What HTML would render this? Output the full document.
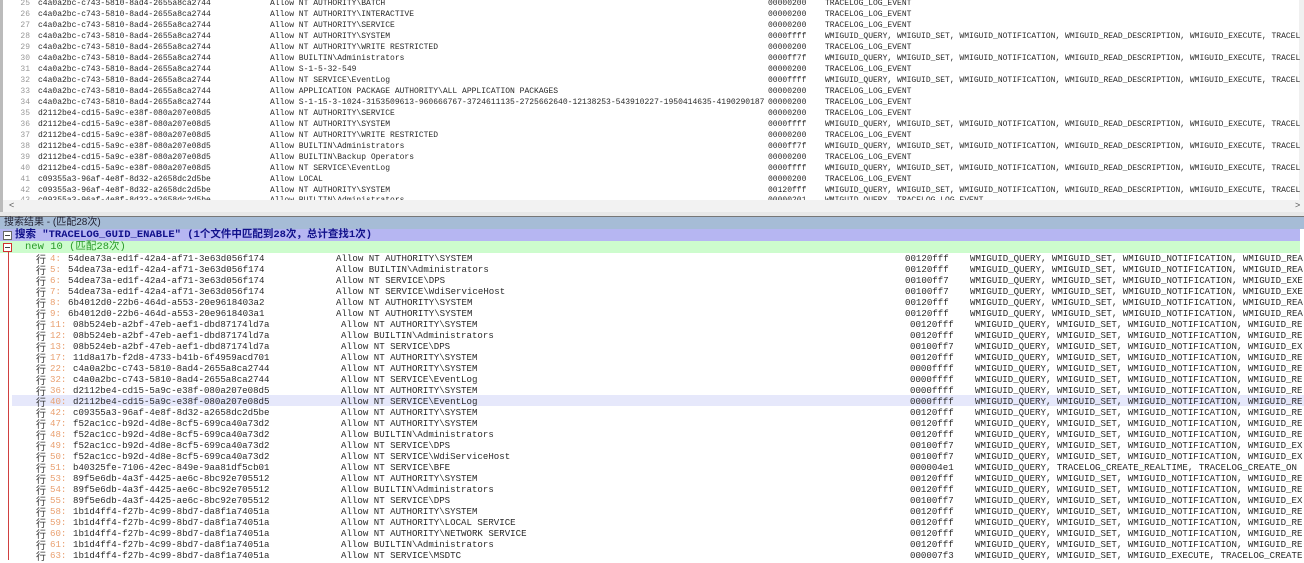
<!DOCTYPE html>
<html><head><meta charset="utf-8"><style>
body{margin:0;width:1304px;height:560px;overflow:hidden;background:#fff;position:relative;font-family:"Liberation Mono","Noto Sans CJK SC",monospace;color:#2a2a2a}
.r{position:absolute;left:0;height:11px;width:1304px;white-space:pre;font-size:8px;line-height:11px}
.r span{position:absolute;top:0}
.n{left:6px;width:24px;text-align:right;color:#999}
.g{left:38px}.a{left:270px}.m{left:768px}.w{left:825px}
.b{position:absolute;height:11px;white-space:pre;font-size:9.1px;line-height:11px;width:1304px}
.b span{position:absolute;top:0}
.h{left:36px;font-family:"Noto Sans CJK SC",sans-serif;font-size:10px;color:#333}
.k{left:50px;color:#e9a070}
.G{left:68px}.A{left:336px}.M{left:905px}.W{left:970px}
.b.d{left:5px}
.bx{position:absolute;left:3px;top:2px;width:7px;height:7px;background:#fff}
.bx:after{content:"";position:absolute;left:1px;top:3px;width:5px;height:1px;background:#444}
</style></head><body>
<div style="position:absolute;left:0;top:0;width:3px;height:212px;background:#bbb"></div>
<div style="position:absolute;left:1299px;top:0;width:5px;height:200px;background:#f0f0f0"></div>
<div class="r" style="top:-2px"><span class="n">25</span><span class="g">c4a0a2bc-c743-5810-8ad4-2655a8ca2744</span><span class="a">Allow NT AUTHORITY\BATCH</span><span class="m">00000200</span><span class="w">TRACELOG_LOG_EVENT</span></div>
<div class="r" style="top:9px"><span class="n">26</span><span class="g">c4a0a2bc-c743-5810-8ad4-2655a8ca2744</span><span class="a">Allow NT AUTHORITY\INTERACTIVE</span><span class="m">00000200</span><span class="w">TRACELOG_LOG_EVENT</span></div>
<div class="r" style="top:20px"><span class="n">27</span><span class="g">c4a0a2bc-c743-5810-8ad4-2655a8ca2744</span><span class="a">Allow NT AUTHORITY\SERVICE</span><span class="m">00000200</span><span class="w">TRACELOG_LOG_EVENT</span></div>
<div class="r" style="top:31px"><span class="n">28</span><span class="g">c4a0a2bc-c743-5810-8ad4-2655a8ca2744</span><span class="a">Allow NT AUTHORITY\SYSTEM</span><span class="m">0000ffff</span><span class="w">WMIGUID_QUERY, WMIGUID_SET, WMIGUID_NOTIFICATION, WMIGUID_READ_DESCRIPTION, WMIGUID_EXECUTE, TRACEL</span></div>
<div class="r" style="top:42px"><span class="n">29</span><span class="g">c4a0a2bc-c743-5810-8ad4-2655a8ca2744</span><span class="a">Allow NT AUTHORITY\WRITE RESTRICTED</span><span class="m">00000200</span><span class="w">TRACELOG_LOG_EVENT</span></div>
<div class="r" style="top:53px"><span class="n">30</span><span class="g">c4a0a2bc-c743-5810-8ad4-2655a8ca2744</span><span class="a">Allow BUILTIN\Administrators</span><span class="m">0000ff7f</span><span class="w">WMIGUID_QUERY, WMIGUID_SET, WMIGUID_NOTIFICATION, WMIGUID_READ_DESCRIPTION, WMIGUID_EXECUTE, TRACEL</span></div>
<div class="r" style="top:64px"><span class="n">31</span><span class="g">c4a0a2bc-c743-5810-8ad4-2655a8ca2744</span><span class="a">Allow S-1-5-32-549</span><span class="m">00000200</span><span class="w">TRACELOG_LOG_EVENT</span></div>
<div class="r" style="top:75px"><span class="n">32</span><span class="g">c4a0a2bc-c743-5810-8ad4-2655a8ca2744</span><span class="a">Allow NT SERVICE\EventLog</span><span class="m">0000ffff</span><span class="w">WMIGUID_QUERY, WMIGUID_SET, WMIGUID_NOTIFICATION, WMIGUID_READ_DESCRIPTION, WMIGUID_EXECUTE, TRACEL</span></div>
<div class="r" style="top:86px"><span class="n">33</span><span class="g">c4a0a2bc-c743-5810-8ad4-2655a8ca2744</span><span class="a">Allow APPLICATION PACKAGE AUTHORITY\ALL APPLICATION PACKAGES</span><span class="m">00000200</span><span class="w">TRACELOG_LOG_EVENT</span></div>
<div class="r" style="top:97px"><span class="n">34</span><span class="g">c4a0a2bc-c743-5810-8ad4-2655a8ca2744</span><span class="a">Allow S-1-15-3-1024-3153509613-960666767-3724611135-2725662640-12138253-543910227-1950414635-4190290187</span><span class="m">00000200</span><span class="w">TRACELOG_LOG_EVENT</span></div>
<div class="r" style="top:108px"><span class="n">35</span><span class="g">d2112be4-cd15-5a9c-e38f-080a207e08d5</span><span class="a">Allow NT AUTHORITY\SERVICE</span><span class="m">00000200</span><span class="w">TRACELOG_LOG_EVENT</span></div>
<div class="r" style="top:119px"><span class="n">36</span><span class="g">d2112be4-cd15-5a9c-e38f-080a207e08d5</span><span class="a">Allow NT AUTHORITY\SYSTEM</span><span class="m">0000ffff</span><span class="w">WMIGUID_QUERY, WMIGUID_SET, WMIGUID_NOTIFICATION, WMIGUID_READ_DESCRIPTION, WMIGUID_EXECUTE, TRACEL</span></div>
<div class="r" style="top:130px"><span class="n">37</span><span class="g">d2112be4-cd15-5a9c-e38f-080a207e08d5</span><span class="a">Allow NT AUTHORITY\WRITE RESTRICTED</span><span class="m">00000200</span><span class="w">TRACELOG_LOG_EVENT</span></div>
<div class="r" style="top:141px"><span class="n">38</span><span class="g">d2112be4-cd15-5a9c-e38f-080a207e08d5</span><span class="a">Allow BUILTIN\Administrators</span><span class="m">0000ff7f</span><span class="w">WMIGUID_QUERY, WMIGUID_SET, WMIGUID_NOTIFICATION, WMIGUID_READ_DESCRIPTION, WMIGUID_EXECUTE, TRACEL</span></div>
<div class="r" style="top:152px"><span class="n">39</span><span class="g">d2112be4-cd15-5a9c-e38f-080a207e08d5</span><span class="a">Allow BUILTIN\Backup Operators</span><span class="m">00000200</span><span class="w">TRACELOG_LOG_EVENT</span></div>
<div class="r" style="top:163px"><span class="n">40</span><span class="g">d2112be4-cd15-5a9c-e38f-080a207e08d5</span><span class="a">Allow NT SERVICE\EventLog</span><span class="m">0000ffff</span><span class="w">WMIGUID_QUERY, WMIGUID_SET, WMIGUID_NOTIFICATION, WMIGUID_READ_DESCRIPTION, WMIGUID_EXECUTE, TRACEL</span></div>
<div class="r" style="top:174px"><span class="n">41</span><span class="g">c09355a3-96af-4e8f-8d32-a2658dc2d5be</span><span class="a">Allow LOCAL</span><span class="m">00000200</span><span class="w">TRACELOG_LOG_EVENT</span></div>
<div class="r" style="top:185px"><span class="n">42</span><span class="g">c09355a3-96af-4e8f-8d32-a2658dc2d5be</span><span class="a">Allow NT AUTHORITY\SYSTEM</span><span class="m">00120fff</span><span class="w">WMIGUID_QUERY, WMIGUID_SET, WMIGUID_NOTIFICATION, WMIGUID_READ_DESCRIPTION, WMIGUID_EXECUTE, TRACEL</span></div>
<div class="r" style="top:195px;height:5px;overflow:hidden"><span class="n">43</span><span class="g">c09355a3-96af-4e8f-8d32-a2658dc2d5be</span><span class="a">Allow BUILTIN\Administrators</span><span class="m">00000201</span><span class="w">WMIGUID_QUERY, TRACELOG_LOG_EVENT</span></div>
<div style="position:absolute;left:3px;top:200px;width:1301px;height:12px;background:#f2f2f2;font:9px 'Liberation Sans',sans-serif;color:#555"><span style="position:absolute;left:6px;top:0">&lt;</span><span style="position:absolute;left:1292px;top:0">&gt;</span></div>
<div style="position:absolute;left:0;top:212px;width:1304px;height:4px;background:#e8e8e8;border-bottom:1px solid #777"></div>
<div style="position:absolute;left:0;top:217px;width:1304px;height:12px;background:#a6bcd6;font:10px 'Liberation Sans','Noto Sans CJK SC',sans-serif;line-height:12px;color:#223"><span style="padding-left:4px">搜索结果 - (匹配28次)</span></div>
<div style="position:absolute;left:0;top:229px;width:1300px;height:12px;background:#b6b6f2;font:bold 10.5px 'Liberation Mono','Noto Sans CJK SC',monospace;line-height:12px;color:#10108a;white-space:pre"><span class="bx" style="border:1px solid #666"></span><span style="position:absolute;left:15px">搜索 "TRACELOG_GUID_ENABLE" (1个文件中匹配到28次，总计查找1次)</span></div>
<div style="position:absolute;left:0;top:241px;width:1300px;height:12px;background:#cdfccd;font:10.5px 'Liberation Mono','Noto Sans CJK SC',monospace;line-height:12px;color:#2a9a2a;white-space:pre"><span class="bx" style="border:1px solid #d03030"></span><span style="position:absolute;left:25px">new 10 (匹配28次)</span></div>
<div style="position:absolute;left:8px;top:252px;width:1px;height:308px;background:#d04040"></div>
<div style="position:absolute;left:12px;top:395px;width:1292px;height:11px;background:#e6e8fb"></div>
<div class="b" style="top:253px"><span class="h">行</span><span class="k">4:</span><span class="G">54dea73a-ed1f-42a4-af71-3e63d056f174</span><span class="A">Allow NT AUTHORITY\SYSTEM</span><span class="M">00120fff</span><span class="W">WMIGUID_QUERY, WMIGUID_SET, WMIGUID_NOTIFICATION, WMIGUID_REA</span></div>
<div class="b" style="top:264px"><span class="h">行</span><span class="k">5:</span><span class="G">54dea73a-ed1f-42a4-af71-3e63d056f174</span><span class="A">Allow BUILTIN\Administrators</span><span class="M">00120fff</span><span class="W">WMIGUID_QUERY, WMIGUID_SET, WMIGUID_NOTIFICATION, WMIGUID_REA</span></div>
<div class="b" style="top:275px"><span class="h">行</span><span class="k">6:</span><span class="G">54dea73a-ed1f-42a4-af71-3e63d056f174</span><span class="A">Allow NT SERVICE\DPS</span><span class="M">00100ff7</span><span class="W">WMIGUID_QUERY, WMIGUID_SET, WMIGUID_NOTIFICATION, WMIGUID_EXE</span></div>
<div class="b" style="top:286px"><span class="h">行</span><span class="k">7:</span><span class="G">54dea73a-ed1f-42a4-af71-3e63d056f174</span><span class="A">Allow NT SERVICE\WdiServiceHost</span><span class="M">00100ff7</span><span class="W">WMIGUID_QUERY, WMIGUID_SET, WMIGUID_NOTIFICATION, WMIGUID_EXE</span></div>
<div class="b" style="top:297px"><span class="h">行</span><span class="k">8:</span><span class="G">6b4012d0-22b6-464d-a553-20e9618403a2</span><span class="A">Allow NT AUTHORITY\SYSTEM</span><span class="M">00120fff</span><span class="W">WMIGUID_QUERY, WMIGUID_SET, WMIGUID_NOTIFICATION, WMIGUID_REA</span></div>
<div class="b" style="top:308px"><span class="h">行</span><span class="k">9:</span><span class="G">6b4012d0-22b6-464d-a553-20e9618403a1</span><span class="A">Allow NT AUTHORITY\SYSTEM</span><span class="M">00120fff</span><span class="W">WMIGUID_QUERY, WMIGUID_SET, WMIGUID_NOTIFICATION, WMIGUID_REA</span></div>
<div class="b d" style="top:319px"><span class="h" style="left:31px">行</span><span class="k" style="left:45px">11:</span><span class="G">08b524eb-a2bf-47eb-aef1-dbd87174ld7a</span><span class="A">Allow NT AUTHORITY\SYSTEM</span><span class="M">00120fff</span><span class="W">WMIGUID_QUERY, WMIGUID_SET, WMIGUID_NOTIFICATION, WMIGUID_RE</span></div>
<div class="b d" style="top:330px"><span class="h" style="left:31px">行</span><span class="k" style="left:45px">12:</span><span class="G">08b524eb-a2bf-47eb-aef1-dbd87174ld7a</span><span class="A">Allow BUILTIN\Administrators</span><span class="M">00120fff</span><span class="W">WMIGUID_QUERY, WMIGUID_SET, WMIGUID_NOTIFICATION, WMIGUID_RE</span></div>
<div class="b d" style="top:341px"><span class="h" style="left:31px">行</span><span class="k" style="left:45px">13:</span><span class="G">08b524eb-a2bf-47eb-aef1-dbd87174ld7a</span><span class="A">Allow NT SERVICE\DPS</span><span class="M">00100ff7</span><span class="W">WMIGUID_QUERY, WMIGUID_SET, WMIGUID_NOTIFICATION, WMIGUID_EX</span></div>
<div class="b d" style="top:352px"><span class="h" style="left:31px">行</span><span class="k" style="left:45px">17:</span><span class="G">11d8a17b-f2d8-4733-b41b-6f4959acd701</span><span class="A">Allow NT AUTHORITY\SYSTEM</span><span class="M">00120fff</span><span class="W">WMIGUID_QUERY, WMIGUID_SET, WMIGUID_NOTIFICATION, WMIGUID_RE</span></div>
<div class="b d" style="top:363px"><span class="h" style="left:31px">行</span><span class="k" style="left:45px">22:</span><span class="G">c4a0a2bc-c743-5810-8ad4-2655a8ca2744</span><span class="A">Allow NT AUTHORITY\SYSTEM</span><span class="M">0000ffff</span><span class="W">WMIGUID_QUERY, WMIGUID_SET, WMIGUID_NOTIFICATION, WMIGUID_RE</span></div>
<div class="b d" style="top:374px"><span class="h" style="left:31px">行</span><span class="k" style="left:45px">32:</span><span class="G">c4a0a2bc-c743-5810-8ad4-2655a8ca2744</span><span class="A">Allow NT SERVICE\EventLog</span><span class="M">0000ffff</span><span class="W">WMIGUID_QUERY, WMIGUID_SET, WMIGUID_NOTIFICATION, WMIGUID_RE</span></div>
<div class="b d" style="top:385px"><span class="h" style="left:31px">行</span><span class="k" style="left:45px">36:</span><span class="G">d2112be4-cd15-5a9c-e38f-080a207e08d5</span><span class="A">Allow NT AUTHORITY\SYSTEM</span><span class="M">0000ffff</span><span class="W">WMIGUID_QUERY, WMIGUID_SET, WMIGUID_NOTIFICATION, WMIGUID_RE</span></div>
<div class="b d" style="top:396px"><span class="h" style="left:31px">行</span><span class="k" style="left:45px">40:</span><span class="G">d2112be4-cd15-5a9c-e38f-080a207e08d5</span><span class="A">Allow NT SERVICE\EventLog</span><span class="M">0000ffff</span><span class="W">WMIGUID_QUERY, WMIGUID_SET, WMIGUID_NOTIFICATION, WMIGUID_RE</span></div>
<div class="b d" style="top:407px"><span class="h" style="left:31px">行</span><span class="k" style="left:45px">42:</span><span class="G">c09355a3-96af-4e8f-8d32-a2658dc2d5be</span><span class="A">Allow NT AUTHORITY\SYSTEM</span><span class="M">00120fff</span><span class="W">WMIGUID_QUERY, WMIGUID_SET, WMIGUID_NOTIFICATION, WMIGUID_RE</span></div>
<div class="b d" style="top:418px"><span class="h" style="left:31px">行</span><span class="k" style="left:45px">47:</span><span class="G">f52ac1cc-b92d-4d8e-8cf5-699ca40a73d2</span><span class="A">Allow NT AUTHORITY\SYSTEM</span><span class="M">00120fff</span><span class="W">WMIGUID_QUERY, WMIGUID_SET, WMIGUID_NOTIFICATION, WMIGUID_RE</span></div>
<div class="b d" style="top:429px"><span class="h" style="left:31px">行</span><span class="k" style="left:45px">48:</span><span class="G">f52ac1cc-b92d-4d8e-8cf5-699ca40a73d2</span><span class="A">Allow BUILTIN\Administrators</span><span class="M">00120fff</span><span class="W">WMIGUID_QUERY, WMIGUID_SET, WMIGUID_NOTIFICATION, WMIGUID_RE</span></div>
<div class="b d" style="top:440px"><span class="h" style="left:31px">行</span><span class="k" style="left:45px">49:</span><span class="G">f52ac1cc-b92d-4d8e-8cf5-699ca40a73d2</span><span class="A">Allow NT SERVICE\DPS</span><span class="M">00100ff7</span><span class="W">WMIGUID_QUERY, WMIGUID_SET, WMIGUID_NOTIFICATION, WMIGUID_EX</span></div>
<div class="b d" style="top:451px"><span class="h" style="left:31px">行</span><span class="k" style="left:45px">50:</span><span class="G">f52ac1cc-b92d-4d8e-8cf5-699ca40a73d2</span><span class="A">Allow NT SERVICE\WdiServiceHost</span><span class="M">00100ff7</span><span class="W">WMIGUID_QUERY, WMIGUID_SET, WMIGUID_NOTIFICATION, WMIGUID_EX</span></div>
<div class="b d" style="top:462px"><span class="h" style="left:31px">行</span><span class="k" style="left:45px">51:</span><span class="G">b40325fe-7106-42ec-849e-9aa81df5cb01</span><span class="A">Allow NT SERVICE\BFE</span><span class="M">000004e1</span><span class="W">WMIGUID_QUERY, TRACELOG_CREATE_REALTIME, TRACELOG_CREATE_ON</span></div>
<div class="b d" style="top:473px"><span class="h" style="left:31px">行</span><span class="k" style="left:45px">53:</span><span class="G">89f5e6db-4a3f-4425-ae6c-8bc92e705512</span><span class="A">Allow NT AUTHORITY\SYSTEM</span><span class="M">00120fff</span><span class="W">WMIGUID_QUERY, WMIGUID_SET, WMIGUID_NOTIFICATION, WMIGUID_RE</span></div>
<div class="b d" style="top:484px"><span class="h" style="left:31px">行</span><span class="k" style="left:45px">54:</span><span class="G">89f5e6db-4a3f-4425-ae6c-8bc92e705512</span><span class="A">Allow BUILTIN\Administrators</span><span class="M">00120fff</span><span class="W">WMIGUID_QUERY, WMIGUID_SET, WMIGUID_NOTIFICATION, WMIGUID_RE</span></div>
<div class="b d" style="top:495px"><span class="h" style="left:31px">行</span><span class="k" style="left:45px">55:</span><span class="G">89f5e6db-4a3f-4425-ae6c-8bc92e705512</span><span class="A">Allow NT SERVICE\DPS</span><span class="M">00100ff7</span><span class="W">WMIGUID_QUERY, WMIGUID_SET, WMIGUID_NOTIFICATION, WMIGUID_EX</span></div>
<div class="b d" style="top:506px"><span class="h" style="left:31px">行</span><span class="k" style="left:45px">58:</span><span class="G">1b1d4ff4-f27b-4c99-8bd7-da8f1a74051a</span><span class="A">Allow NT AUTHORITY\SYSTEM</span><span class="M">00120fff</span><span class="W">WMIGUID_QUERY, WMIGUID_SET, WMIGUID_NOTIFICATION, WMIGUID_RE</span></div>
<div class="b d" style="top:517px"><span class="h" style="left:31px">行</span><span class="k" style="left:45px">59:</span><span class="G">1b1d4ff4-f27b-4c99-8bd7-da8f1a74051a</span><span class="A">Allow NT AUTHORITY\LOCAL SERVICE</span><span class="M">00120fff</span><span class="W">WMIGUID_QUERY, WMIGUID_SET, WMIGUID_NOTIFICATION, WMIGUID_RE</span></div>
<div class="b d" style="top:528px"><span class="h" style="left:31px">行</span><span class="k" style="left:45px">60:</span><span class="G">1b1d4ff4-f27b-4c99-8bd7-da8f1a74051a</span><span class="A">Allow NT AUTHORITY\NETWORK SERVICE</span><span class="M">00120fff</span><span class="W">WMIGUID_QUERY, WMIGUID_SET, WMIGUID_NOTIFICATION, WMIGUID_RE</span></div>
<div class="b d" style="top:539px"><span class="h" style="left:31px">行</span><span class="k" style="left:45px">61:</span><span class="G">1b1d4ff4-f27b-4c99-8bd7-da8f1a74051a</span><span class="A">Allow BUILTIN\Administrators</span><span class="M">00120fff</span><span class="W">WMIGUID_QUERY, WMIGUID_SET, WMIGUID_NOTIFICATION, WMIGUID_RE</span></div>
<div class="b d" style="top:550px"><span class="h" style="left:31px">行</span><span class="k" style="left:45px">63:</span><span class="G">1b1d4ff4-f27b-4c99-8bd7-da8f1a74051a</span><span class="A">Allow NT SERVICE\MSDTC</span><span class="M">000007f3</span><span class="W">WMIGUID_QUERY, WMIGUID_SET, WMIGUID_EXECUTE, TRACELOG_CREATE</span></div>
</body></html>
